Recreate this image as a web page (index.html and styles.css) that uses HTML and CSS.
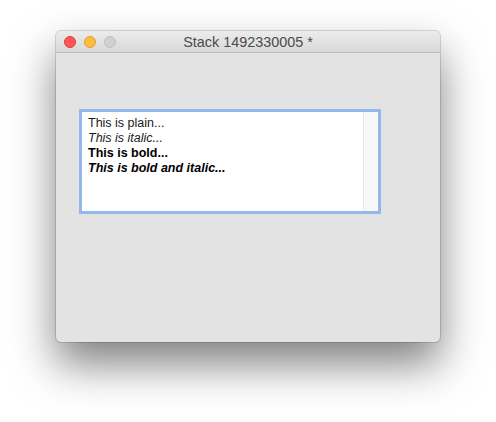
FILE: index.html
```html
<!DOCTYPE html>
<html>
<head>
<meta charset="utf-8">
<link rel="stylesheet" href="styles.css">
</head>
<body>
<div class="stage">
  <div class="window">
    <div class="titlebar">
      <div class="lights">
        <span class="light red"></span>
        <span class="light yellow"></span>
        <span class="light gray"></span>
      </div>
      <div class="title">Stack 1492330005 *</div>
    </div>
    <div class="content">
      <div class="field">
        <div class="text">
          <div class="plain">This is plain...</div>
          <div class="italic">This is italic...</div>
          <div class="bold">This is bold...</div>
          <div class="bolditalic">This is bold and italic...</div>
        </div>
        <div class="scroller"></div>
      </div>
    </div>
  </div>
</div>
</body>
</html>
```
FILE: styles.css
```css
html, body {
  margin: 0;
  padding: 0;
  background: #ffffff;
}
.stage {
  padding: 31px 56px 0 56px;
  height: 422px;
  box-sizing: border-box;
  overflow: hidden;
}
.window {
  width: 384px;
  height: 311px;
  border-radius: 5px;
  background: #e3e3e3;
  box-shadow: 0 0 0 1px rgba(0,0,0,0.14), 0 22px 44px rgba(0,0,0,0.5);
  overflow: hidden;
  display: flex;
  flex-direction: column;
}
.titlebar {
  height: 21px;
  border-bottom: 1px solid #bcbcbc;
  background: linear-gradient(#ececec, #d8d8d8);
  position: relative;
  display: flex;
  align-items: center;
}
.lights {
  display: flex;
  gap: 8px;
  padding-left: 8px;
}
.light {
  width: 12px;
  height: 12px;
  border-radius: 50%;
  box-sizing: border-box;
}
.red { background: #fc5753; border: 1px solid #df3d39; }
.yellow { background: #fdbc40; border: 1px solid #de9f34; }
.gray { background: #d0d0d0; border: 1px solid #c0c0c0; }
.title {
  position: absolute;
  left: 0;
  right: 0;
  top: 0;
  bottom: 0;
  display: flex;
  align-items: center;
  justify-content: center;
  font-family: "Liberation Sans", Arial, sans-serif;
  font-size: 14.4px;
  color: #4b4b4b;
}
.content {
  flex: 1;
  padding: 56px 0 0 23px;
}
.field {
  width: 296px;
  height: 99px;
  border: 3px solid #95b8ea;
  background: #ffffff;
  display: flex;
}
.text {
  flex: 1;
  padding: 4px 0 0 6px;
  font-family: "Liberation Sans", Arial, sans-serif;
  font-size: 12.5px;
  line-height: 15px;
  color: #1a1a1a;
}
.italic { font-style: italic; }
.bold { font-weight: bold; color: #000; }
.bolditalic { font-weight: bold; font-style: italic; color: #000; }
.scroller {
  width: 14px;
  border-left: 1px solid #e8e8e8;
  background: #f8f8f8;
}
```
